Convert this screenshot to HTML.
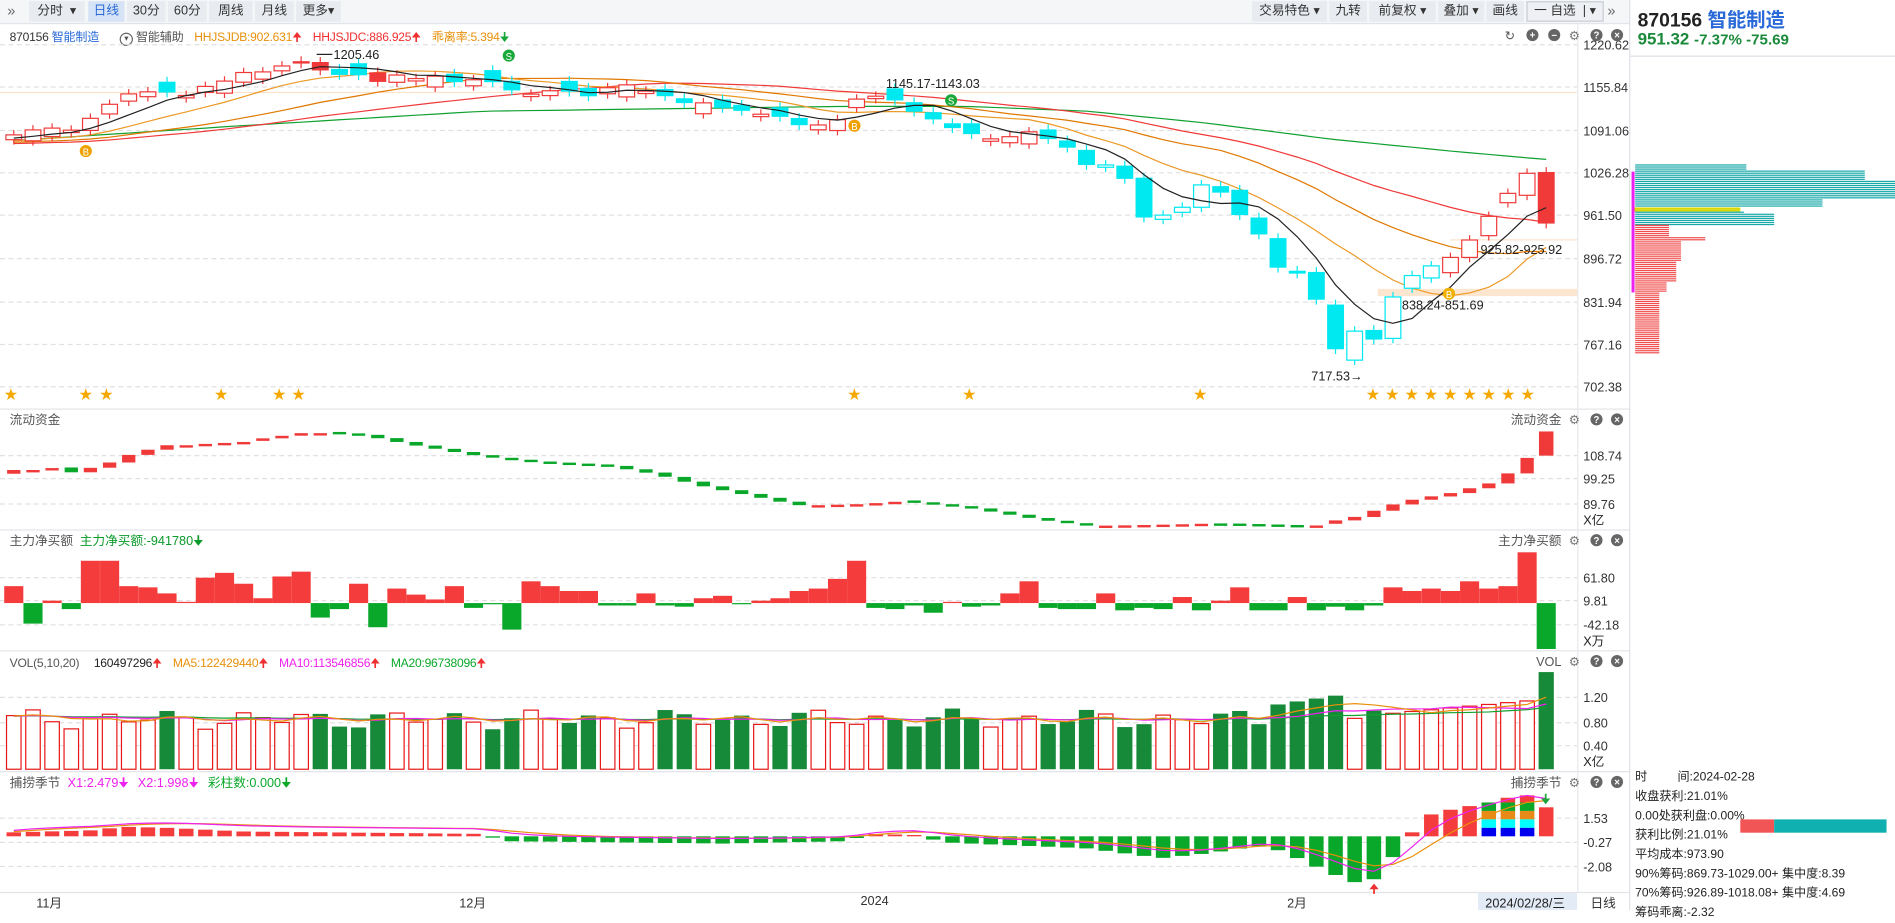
<!DOCTYPE html>
<html><head><meta charset="utf-8">
<style>
html,body{margin:0;padding:0;width:1895px;height:910px;overflow:hidden;background:#fff;}
#w{position:absolute;left:0;top:0;width:1568px;height:753px;transform:scale(1.20855);transform-origin:0 0;font-family:"Liberation Sans","Noto Sans CJK SC",sans-serif;font-size:10.5px;color:#333;}
.a{position:absolute;white-space:nowrap;}
.btn{position:absolute;top:1px;height:17px;line-height:17px;background:#e8ebf0;text-align:center;font-size:10.5px;color:#333;}
.hd span{margin-right:9px;}
</style></head><body>
<div id="w">
<div class="a" style="left:0;top:0;width:1348px;height:19px;background:#f5f6f8;border-bottom:1px solid #e2e4ea;"></div>
<div class="a" style="left:6px;top:2px;font-size:12px;color:#666;">»</div>
<div class="btn" style="left:24px;width:46px;">分时 &nbsp;▾</div>
<div class="btn" style="left:73px;width:30px;background:#d6e2f5;color:#2a6ad8;">日线</div>
<div class="btn" style="left:105px;width:32px;">30分</div>
<div class="btn" style="left:139px;width:32px;">60分</div>
<div class="btn" style="left:173px;width:36px;">周线</div>
<div class="btn" style="left:211px;width:32px;">月线</div>
<div class="btn" style="left:245px;width:37px;">更多▾</div>
<div class="btn" style="left:1036px;width:62px;">交易特色 ▾</div>
<div class="btn" style="left:1100px;width:31px;">九转</div>
<div class="btn" style="left:1133px;width:55px;">前复权 ▾</div>
<div class="btn" style="left:1190px;width:38px;">叠加 ▾</div>
<div class="btn" style="left:1230px;width:31px;">画线</div>
<div class="btn" style="left:1263px;width:62px;background:#eef0f4;border:1px solid #c8ccd4;height:15px;line-height:15px;">一 自选 &nbsp;| ▾</div>
<div class="a" style="left:1330px;top:2px;font-size:12px;color:#666;">»</div>

<div class="a" style="left:8px;top:22px;font-size:10px;letter-spacing:-0.2px;">870156 <span style="color:#2a6ad8">智能制造</span></div>
<div class="a hd" style="left:99px;top:22px;font-size:10px;letter-spacing:-0.2px;"><span style="color:#555;"><span style="display:inline-block;margin:0;width:9px;height:9px;border:1px solid #666;border-radius:50%;font-size:7px;line-height:9px;text-align:center;">▾</span> 智能辅助</span><span style="color:#e8900c;">HHJSJDB:902.631<b style="color:#f03030;font-weight:normal">🠉</b></span><span style="color:#f03030;">HHJSJDC:886.925🠉</span><span style="color:#e8900c;">乖离率:5.394<b style="color:#1aa53a;font-weight:normal">🠋</b></span></div>

<div class="a hd" style="left:8px;top:542px;font-size:10px;letter-spacing:-0.2px;"><span style="color:#555;margin-right:12px">VOL(5,10,20)</span><span style="color:#222">160497296<b style="color:#f03030;font-weight:normal">🠉</b></span><span style="color:#e8900c">MA5:122429440<b style="color:#f03030;font-weight:normal">🠉</b></span><span style="color:#ee22ee">MA10:113546856<b style="color:#f03030;font-weight:normal">🠉</b></span><span style="color:#0aa82a">MA20:96738096<b style="color:#f03030;font-weight:normal">🠉</b></span></div>

<div class="a" style="left:1348px;top:0;width:1px;height:753px;background:#dde0e6;"></div>
<div class="a" style="left:1355px;top:3px;font-size:16px;font-weight:bold;color:#222;">870156 <span style="color:#2a6ad8">智能制造</span></div>
<div class="a" style="left:1355px;top:24px;font-size:14px;font-weight:bold;color:#1a8a3a;">951.32 <span style="font-size:12.5px">-7.37% -75.69</span></div>
<div class="a" style="left:1349px;top:46px;width:219px;height:1px;background:#dde0e6;"></div>
<div class="a" style="left:1353px;top:636px;font-size:10px;line-height:16px;color:#222;">
时 &nbsp; &nbsp; &nbsp; &nbsp; 间:2024-02-28<br>收盘获利:21.01%<br>0.00处获利盘:0.00%<br>获利比例:21.01%<br>平均成本:973.90<br>90%筹码:869.73-1029.00+ 集中度:8.39<br>70%筹码:926.89-1018.08+ 集中度:4.69<br>筹码乖离:-2.32</div>
<div class="a" style="left:1440px;top:678px;width:28px;height:11px;background:#f25555;"></div>
<div class="a" style="left:1468px;top:678px;width:93px;height:11px;background:#10b0b0;"></div>

<div class="a" style="left:0;top:738px;width:1348px;height:1px;background:#e2e4ea;"></div>
<div class="a" style="left:30px;top:740px;">11月</div>
<div class="a" style="left:380px;top:740px;">12月</div>
<div class="a" style="left:712px;top:740px;">2024</div>
<div class="a" style="left:1065px;top:740px;">2月</div>
<div class="a" style="left:1223px;top:739px;width:82px;height:14px;background:#e3ebf7;"></div>
<div class="a" style="left:1229px;top:740px;color:#222;">2024/02/28/三</div>
<div class="a" style="left:1316px;top:740px;">日线</div>

<svg id="s" class="a" style="left:0;top:0" width="1568" height="753" xmlns="http://www.w3.org/2000/svg" font-family="Liberation Sans, Noto Sans CJK SC, sans-serif" font-size="10.5"></svg>
</div>
<script>
var S=document.getElementById('s'),h=[];
function R(x,y,w,hh,f,st){if(hh<0){y+=hh;hh=-hh;}h.push('<rect x="'+x.toFixed(1)+'" y="'+y.toFixed(1)+'" width="'+w.toFixed(1)+'" height="'+Math.max(hh,1).toFixed(1)+'" fill="'+f+'"'+(st?' stroke="'+st+'" stroke-width="1"':'')+'/>');}
function L(x1,y1,x2,y2,c,d){h.push('<line x1="'+x1+'" y1="'+y1+'" x2="'+x2+'" y2="'+y2+'" stroke="'+c+'" stroke-width="1"'+(d?' stroke-dasharray="4,3"':'')+'/>');}
function T(x,y,t,c,a){h.push('<text x="'+x+'" y="'+y+'" fill="'+(c||'#333')+'"'+(a?' text-anchor="'+a+'"':'')+'>'+t+'</text>');}
function P(pts,c){h.push('<polyline fill="none" stroke="'+c+'" stroke-width="1" points="'+pts.map(function(p){return p[0].toFixed(1)+','+p[1].toFixed(1)}).join(' ')+'"/>');}
function interp(k,x){for(var i=0;i<k.length-1;i++){if(x<=k[i+1][0]){var t=(x-k[i][0])/(k[i+1][0]-k[i][0]);return k[i][1]+t*(k[i+1][1]-k[i][1]);}}return k[k.length-1][1];}
var N=81;function cx(i){return 1279.4-(80-i)*15.85;}
[338,438,538,638].forEach(function(y){R(0,y,1348,1,'#e2e4ea');});
R(1305,19,1,719,'#e6e8ee');
var mg=[[37,'1220.62'],[72,'1155.84'],[108,'1091.06'],[143,'1026.28'],[178,'961.50'],[214,'896.72'],[250,'831.94'],[285,'767.16'],[320,'702.38']];
mg.forEach(function(g){L(0,g[0],1305,g[0],'#e0e0e0',1);T(1310,g[0]+4,g[1],'#333');});
R(0,76,1305,1,'#fbe3cc');R(1140,239,165,6,'#fde6d0');R(1200,198,105,1,'#fbe3cc');
var kp=[[10,112],[25,108],[40,105],[55,110],[72,100],[88,88],[104,78],[120,76],[136,76],[152,80],[168,72],[184,68],[200,60],[216,60],[232,55],[248,50],[264,58],[280,62],[296,62],[312,68],[328,62],[344,65],[360,63],[376,68],[392,66],[408,68],[424,75],[440,78],[456,75],[472,76],[488,80],[504,72],[520,70],[536,76],[552,80],[568,86],[584,85],[600,90],[616,92],[632,95],[648,97],[664,105],[680,103],[696,98],[712,78],[728,80],[744,84],[760,95],[776,100],[792,108],[808,112],[824,116],[840,112],[856,108],[872,118],[888,124]];
var late=[[124,136.5,'f'],[136.5,138.4,'h'],[137,148,'f'],[147,180,'f'],[178,181.5,'h'],[171.5,175.7,'h'],[153,171.5,'h'],[154,159.4,'f'],[157,178,'f'],[180,194,'f'],[197,221.5,'f'],[224,226.4,'f'],[225,248,'f'],[252,289,'f'],[274,298,'h'],[273,281,'f'],[245.7,280,'h'],[228,238.5,'h'],[220,230,'h'],[213,225.6,'r'],[198.6,213,'r'],[179,195,'r'],[160,167.7,'r'],[143.4,161.6,'r'],[142.3,185,'R']];
var C=[],cl=[],prev=112;
for(var i=0;i<N;i++){var x=cx(i);var o,c,t;
 if(i>=56){var d=late[i-56];t=d[2];if(t=='f'){o=d[0];c=d[1];}else{o=d[1];c=d[0];}}
 else{c=interp(kp,x);var bs=4+((i*5)%7);o=c<prev?c+bs:c-bs;if(i%6==3)o=c+2;t=c<o?'r':'f';if(i==15||i==16||i==19)t='R';}
 C.push([x,o,c,t]);cl.push(t=='f'?Math.max(o,c):Math.min(o,c));prev=c;}
cl[80]=178;
function ma(arr,n,pad){var r=[];for(var i=0;i<arr.length;i++){var s=0;for(var j=i-n+1;j<=i;j++)s+=(j<0?pad:arr[j]);r.push(s/n);}return r;}
var m5=ma(cl,5,115),m10=ma(cl,10,117),m20=ma(cl,20,118),m30=ma(cl,30,119);
var g60=[[0,117],[200,104],[400,92],[700,88],[800,88],[900,92],[1000,102],[1100,115],[1200,125],[1280,132]];
P(C.map(function(c,i){return [c[0],interp(g60,c[0])]}),'#10a030');
P(C.map(function(c,i){return [c[0],m30[i]]}),'#f03a3a');
P(C.map(function(c,i){return [c[0],m20[i]]}),'#e07800');
P(C.map(function(c,i){return [c[0],m10[i]]}),'#eb9a28');
C.forEach(function(c){var top=Math.min(c[1],c[2]),bot=Math.max(c[1],c[2]);var col=(c[3]=='r'||c[3]=='R')?'#f03a3a':'#00e8f0';
 L(c[0],top-4,c[0],bot+4,col);
 if(c[3]=='h'||c[3]=='r')R(c[0]-6.5,top,13,bot-top,'#fff',col);else R(c[0]-7,top,14,bot-top,col);});
P(C.map(function(c,i){return [c[0],m5[i]]}),'#222');
T(276,49,'1205.46','#222');L(262,45,275,45,'#222');
T(733,73,'1145.17-1143.03','#222');
T(1085,315,'717.53→','#222');
T(1225,210,'925.82-925.92','#222');
T(1160,256,'838.24-851.69','#222');
function badge(x,y,t,c){h.push('<circle cx="'+x+'" cy="'+y+'" r="5" fill="'+c+'"/>');T(x,y+3.5,t,'#fff','middle');}
h.push('<g font-size="8">');badge(71,125,'B','#f0a000');badge(421,46,'S','#19a83a');badge(707,104,'B','#f0a000');badge(787,83,'S','#19a83a');badge(1199,243,'B','#f0b000');h.push('</g>');
[9,71,88,183,231,247,707,802,993,1136,1152,1168,1184,1200,1216,1232,1248,1264].forEach(function(x){h.push('<text x="'+x+'" y="330" fill="#f5a800" font-size="11" text-anchor="middle">★</text>');});
function ic(x,y,ch){h.push('<circle cx="'+x+'" cy="'+y+'" r="5" fill="#666"/>');h.push('<text x="'+x+'" y="'+(y+3)+'" fill="#fff" font-size="8" font-weight="bold" text-anchor="middle">'+ch+'</text>');}
T(1245,33,'↻','#555');ic(1268,29,'+');ic(1286,29,'−');T(1298,33,'⚙','#777');ic(1321,29,'?');ic(1338,29,'×');
function icons(y,lab){T(1292,y+4,lab,'#555','end');T(1298,y+4,'⚙','#777');ic(1321,y,'?');ic(1338,y,'×');}
T(8,351,'流动资金','#555');icons(347,'流动资金');
[[377,'108.74'],[396,'99.25'],[417,'89.76']].forEach(function(g){L(0,g[0],1305,g[0],'#e0e0e0',1);T(1310,g[0]+4,g[1]);});T(1310,434,'X亿','#222');
var fk=[[0,390],[40,386],[60,391],[90,383],[110,375],[140,368],[200,365],[260,357],[300,360],[340,368],[400,378],[440,382],[500,385],[540,392],[580,402],[620,410],[660,418],[700,417],[740,414],[800,420],[860,430],[900,435],[1000,433],[1080,435],[1120,428],[1160,415],[1200,408],[1240,398],[1262,380],[1280,367]];
var pv=392;C.forEach(function(c,i){var v=interp(fk,c[0]);if(i==80){R(c[0]-6,357,12,20,'#f03a3a');return;}var up=v<pv;R(c[0]-5.5,pv,11,(Math.abs(v-pv)<2?2:v-pv),up?'#f03a3a':'#0aa82a');pv=v;});
T(8,451,'主力净买额','#555');T(66,451,'主力净买额:-941780🠋','#0a9a2a');icons(447,'主力净买额');
[[478,'61.80'],[497,'9.81'],[517,'-42.18']].forEach(function(g){L(0,g[0],1305,g[0],'#e0e0e0',1);T(1310,g[0]+4,g[1]);});T(1310,534,'X万','#222');
var nb=[14,-17,2,-5,35,35,14,13,8,1,21,25,16,4,22,26,-12,-5,16,-20,12,7,3,14,-4,-1,-22,18,14,10,10,-2,-2,8,-2,-3,4,6,-1,2,4,10,12,20,35,-4,-5,-2,-8,1,-3,-2,8,18,-4,-5,-5,8,-6,-4,-5,5,-6,2,13,-6,-6,5,-6,-3,-6,-2,13,10,12,10,18,12,14,42,-38];
C.forEach(function(c,i){var v=nb[i]||0;R(c[0]-7.9,499,15.85,-v,v>=0?'#f53c3c':'#0aa82a');});
icons(547,'VOL');
[[577,'1.20'],[598,'0.80'],[617,'0.40']].forEach(function(g){L(0,g[0],1305,g[0],'#e0e0e0',1);T(1310,g[0]+4,g[1]);});T(1310,634,'X亿','#222');
var vol=[];C.forEach(function(c,i){var v=0.85+0.12*Math.sin(i*1.7)+0.06*Math.cos(i*0.9);if(i>=66&&i<=69)v=1.1+0.05*(i-66);if(i>=72)v=0.95+0.05*(i-72)*0.6;if(i==80)v=1.65;vol.push(v);});
C.forEach(function(c,i){var hh=vol[i]*48.75;var isRed=c[2]<c[1];if(i==80)isRed=false;if(isRed)R(c[0]-6,636.5-hh,12,hh,'#fff','#e81818');else R(c[0]-6.3,636.5-hh,12.6,hh,'#178a3a');});
var v5=ma(vol,5,0.9),v10=ma(vol,10,0.9),v20=ma(vol,20,0.9);
P(C.map(function(c,i){return [c[0],636.5-v20[i]*48.75]}),'#12a030');
P(C.map(function(c,i){return [c[0],636.5-v10[i]*48.75]}),'#ee22ee');
P(C.map(function(c,i){return [c[0],636.5-v5[i]*48.75]}),'#e8900c');
T(8,651,'捕捞季节','#555');T(56,651,'X1:2.479🠋','#ee22ee');T(114,651,'X2:1.998🠋','#ee22ee');T(172,651,'彩柱数:0.000🠋','#0aa82a');icons(647,'捕捞季节');
[[677,'1.53'],[697,'-0.27'],[717,'-2.08']].forEach(function(g){L(0,g[0],1305,g[0],'#e0e0e0',1);T(1310,g[0]+4,g[1]);});
var bk=[[0,3],[80,5],[100,8],[140,7],[200,4],[400,2],[415,-4],[600,-6],[700,-4],[720,2],[760,1],[780,-5],[900,-10],[960,-18],[1000,-14],[1040,-8],[1060,-12],[1100,-30],[1120,-38],[1140,-35],[1152,-18],[1166,1],[1184,18],[1200,22],[1216,25],[1232,28],[1248,32],[1264,34],[1279,24]];
var base=692,bv=[];
C.forEach(function(c,i){var v=interp(bk,c[0]);bv.push(v);
 if(i>=77&&i<=79){var top=base-v;R(c[0]-6,top,12,v-28,'#f53c3c');R(c[0]-6,base-28,12,7,'#0aa82a');R(c[0]-6,base-21,12,7,'#e88a18');R(c[0]-6,base-14,12,7,'#00ffff');R(c[0]-6,base-7,12,7,'#0000ee');}
 else R(c[0]-6,base,12,-v,v>=0?'#f53c3c':'#0aa82a');});
var b1=[],b2=[];var s1=3,s2=3;bv.forEach(function(v,i){s1=s1+(v+4-s1)*0.45;s2=s2+(s1-s2)*0.45;b1.push([C[i][0],base-s1]);b2.push([C[i][0],base-s2]);});
P(b2,'#e8900c');P(b1,'#ee22ee');
T(1137,739,'🠉','#f03030','middle');T(1279,665,'🠋','#1aa53a','middle');
var X0=1350;
for(var y=136;y<186;y+=1.7){var len;if(y<141)len=92;else if(y<148)len=190;else if(y<164)len=218;else if(y<171)len=155;else if(y<176)len=90;else len=115;
 if(y>171&&y<174){R(X0+2,y,88,1.6,'#d8d800');continue;}R(X0+3,y,len,0.9,'#18a8a8');}
for(var y=186;y<292;y+=1.7){var len=y<196?28:y<199?58:y<215?38:y<232?34:y<242?26:20;R(X0+3,y,len,0.9,'#f05050');}
R(1350,142,2.5,100,'#ee22ee');
S.innerHTML=h.join('');
</script>
</body></html>
